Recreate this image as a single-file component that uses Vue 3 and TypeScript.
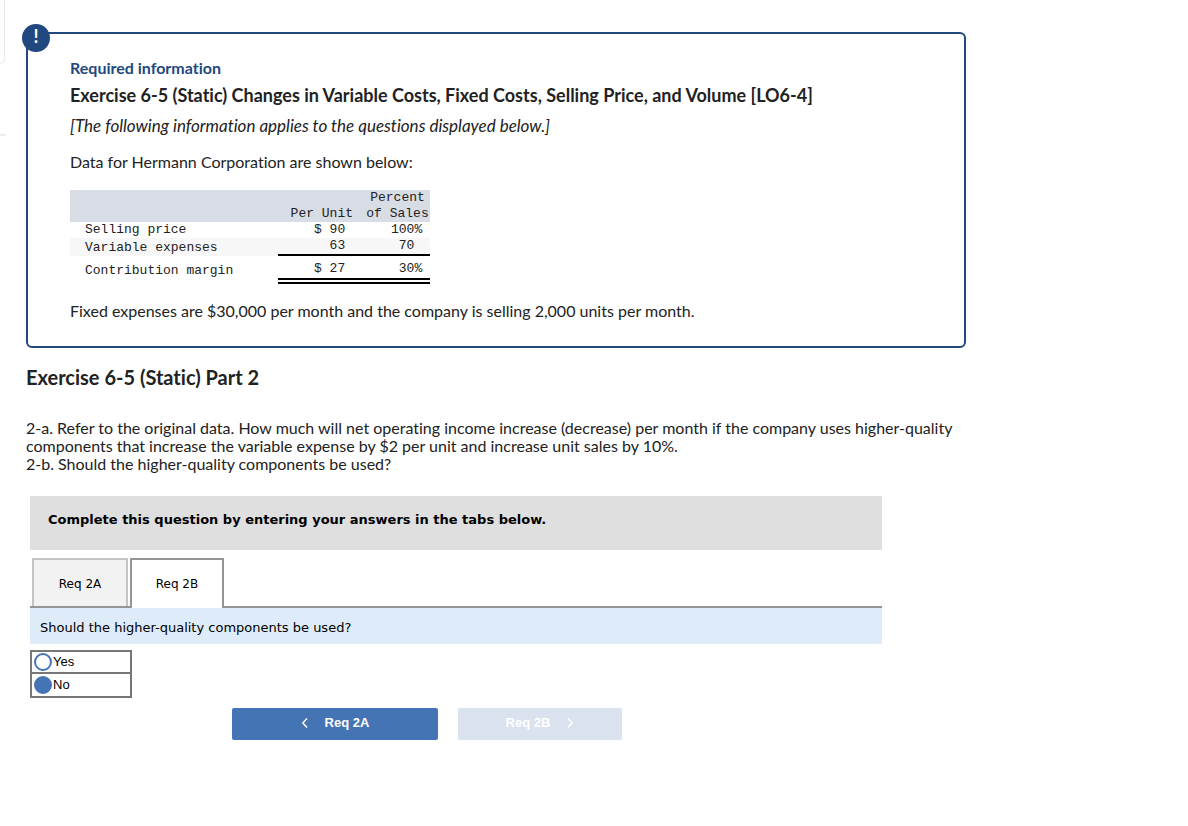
<script setup lang="ts">
import { ref } from 'vue'

interface Row {
  label: string
  unit: string
  percent: string
  kind: string
}

const rows: Row[] = [
  { label: 'Selling price', unit: '$ 90\u00a0', percent: '100%\u00a0', kind: 'first' },
  { label: 'Variable expenses', unit: '63\u00a0', percent: '70\u00a0\u00a0', kind: 'subtotal' },
  { label: 'Contribution margin', unit: '$ 27\u00a0', percent: '30%\u00a0', kind: 'total' },
]

const tabs = ['Req 2A', 'Req 2B']
const active = ref('Req 2B')
const answer = ref('No')
</script>

<template>
  <div class="page">
    <aside class="rail" aria-hidden="true">
      <div class="rail-card"></div>
      <div class="rail-line"></div>
    </aside>
    <main class="content">
      <section class="info">
        <span class="badge">!</span>
        <h2 class="info-label">Required information</h2>
        <h1 class="info-title">Exercise 6-5 (Static) Changes in Variable Costs, Fixed Costs, Selling Price, and Volume [LO6-4]</h1>
        <p class="note">[The following information applies to the questions displayed below.]</p>
        <p class="intro">Data for Hermann Corporation are shown below:</p>
        <table class="data">
          <thead>
            <tr>
              <th class="name"></th>
              <th class="unit">Per Unit</th>
              <th class="percent">Percent<br />of Sales</th>
            </tr>
          </thead>
          <tbody>
            <tr v-for="row in rows" :key="row.label" :class="row.kind">
              <td class="name">{{ row.label }}</td>
              <td class="num">{{ row.unit }}</td>
              <td class="num">{{ row.percent }}</td>
            </tr>
          </tbody>
        </table>
        <p class="fixed">Fixed expenses are $30,000 per month and the company is selling 2,000 units per month.</p>
      </section>

      <h2 class="part">Exercise 6-5 (Static) Part 2</h2>
      <p class="question">
        2-a. Refer to the original data. How much will net operating income increase (decrease) per month if the company uses higher-quality components that increase the variable expense by $2 per unit and increase unit sales by 10%.<br />
        2-b. Should the higher-quality components be used?
      </p>

      <section class="worksheet">
        <p class="instruction">Complete this question by entering your answers in the tabs below.</p>
        <div class="tabs" role="tablist">
          <button
            v-for="tab in tabs"
            :key="tab"
            type="button"
            role="tab"
            class="tab"
            :class="{ active: tab === active }"
            :aria-selected="tab === active"
            @click="active = tab"
          >{{ tab }}</button>
        </div>
        <p id="prompt" class="prompt">Should the higher-quality components be used?</p>
        <div class="choices" role="radiogroup" aria-labelledby="prompt">
          <label v-for="choice in ['Yes', 'No']" :key="choice" class="choice">
            <input v-model="answer" type="radio" name="answer" :value="choice" />
            <span>{{ choice }}</span>
          </label>
        </div>
        <nav class="pager">
          <button type="button" class="previous" @click="active = 'Req 2A'">
            <svg width="8" height="12" viewBox="0 0 8 12"><path d="M6 1.5 1.8 6 6 10.5" /></svg>
            <span>Req 2A</span>
          </button>
          <button type="button" class="next" disabled>
            <span>Req 2B</span>
            <svg width="8" height="12" viewBox="0 0 8 12"><path d="M2 1.5 6.2 6 2 10.5" /></svg>
          </button>
        </nav>
      </section>
    </main>
  </div>
</template>

<style>
body {
  background: #fff;
}
</style>

<style scoped>
* {
  box-sizing: border-box;
}
h1, h2, p {
  margin: 0;
}
.page {
  display: flex;
  gap: 20px;
  color: #222;
  font: 16px/18px Lato, sans-serif;
  font-variant-ligatures: none;
}
.rail {
  flex: 0 0 6px;
}
.rail-card {
  width: 5px;
  height: 64px;
  border: solid #e8e8e8;
  border-width: 0 1px 1px 0;
  border-radius: 0 0 5px 0;
}
.rail-line {
  margin-top: 70px;
  height: 2px;
  background: #eee;
}
.content {
  flex: 1;
  max-width: 940px;
  padding: 32px 0;
}
.info {
  position: relative;
  padding: 25px 42px;
  border: 2px solid #224880;
  border-radius: 6px;
}
.badge {
  position: absolute;
  top: -10px;
  left: -6px;
  width: 28px;
  height: 28px;
  border-radius: 50%;
  background: #224880;
  color: #fff;
  font-weight: 700;
  font-size: 18px;
  line-height: 24px;
  text-align: center;
}
.info-label {
  color: #224880;
  font-size: 16px;
  line-height: 18px;
}
.info-title {
  margin-top: 8px;
  font-size: 18px;
  line-height: 20px;
}
.note {
  margin-top: 12px;
  font-size: 17px;
  font-style: italic;
}
.intro {
  margin-top: 18px;
}
.data {
  width: 360px;
  margin-top: 19px;
  border-collapse: separate;
  border-spacing: 0;
  table-layout: fixed;
  font: 13px/16px "Liberation Mono", monospace;
}
.data th,
.data td {
  padding: 0;
  font-weight: 400;
  vertical-align: top;
}
.data thead {
  background: #d8dce5;
}
.data th {
  line-height: 16px;
}
.data .name {
  width: 208px;
  padding-left: 15px;
  text-align: left;
  vertical-align: bottom;
}
.data th.unit {
  width: 75px;
  text-align: right;
  vertical-align: bottom;
}
.data th.percent {
  padding-left: 12px;
  text-align: center;
  white-space: nowrap;
}
.data .num {
  text-align: right;
}
.subtotal {
  background: #f7f7f7;
}
.subtotal .num {
  border-bottom: 2px solid #000;
}
.total .num {
  height: 28px;
  padding-top: 5px;
  border-bottom: 6px double #000;
}
.total .name {
  padding-bottom: 5px;
}
.fixed {
  margin-top: 18px;
  padding-bottom: 1px;
}
.part {
  margin-top: 17px;
  font-size: 20px;
  line-height: 24px;
}
.question {
  margin-top: 30px;
}
.worksheet {
  max-width: 852px;
  margin: 23px 4px 0;
  color: #000;
  font: 13px/18px "DejaVu Sans", Verdana, sans-serif;
}
.instruction {
  padding: 15px 18px 21px;
  background: #dfdfdf;
  font-weight: 700;
}
.tabs {
  display: flex;
  gap: 2px;
  margin-top: 8px;
  padding: 0 2px;
  border-bottom: 2px solid #959595;
}
.tab {
  width: 96px;
  height: 48px;
  padding: 2px 0 0;
  border: 2px solid #c4c4c4;
  border-bottom: 0;
  background: #f2f2f2;
  color: #000;
  font: 12px/18px "DejaVu Sans", Verdana, sans-serif;
}
.tab.active {
  width: 94px;
  height: 50px;
  margin-bottom: -2px;
  padding: 0;
  border-color: #959595;
  background: #fff;
}
.prompt {
  padding: 11px 10px 7px;
  background: #deecf9;
}
.choices {
  width: 102px;
  margin-top: 6px;
  border: 2px solid #777;
  font: 13px/18px "Liberation Sans", Arial, sans-serif;
}
.choice {
  display: flex;
  align-items: center;
  gap: 1px;
  height: 20px;
  padding-left: 2px;
}
.choice + .choice {
  height: 24px;
  border-top: 2px solid #777;
}
.choice input {
  appearance: none;
  width: 18px;
  height: 18px;
  margin: 0;
  border: 2px solid #4574b4;
  border-radius: 50%;
  background: #fff;
}
.choice input:checked {
  background: #4574b4;
}
.pager {
  display: flex;
  gap: 20px;
  margin-top: 10px;
  padding-left: 202px;
}
.pager button {
  display: flex;
  align-items: center;
  justify-content: center;
  gap: 16px;
  height: 32px;
  padding: 0 0 2px;
  border: 0;
  border-radius: 2px;
  background: #4574b4;
  color: #fff;
  font: 700 13px/18px "Liberation Sans", Arial, sans-serif;
}
.pager .previous {
  width: 206px;
}
.pager .next {
  width: 164px;
  background: #d9e2ee;
}
.pager svg {
  fill: none;
  stroke: currentColor;
  stroke-width: 1.5;
}
</style>
